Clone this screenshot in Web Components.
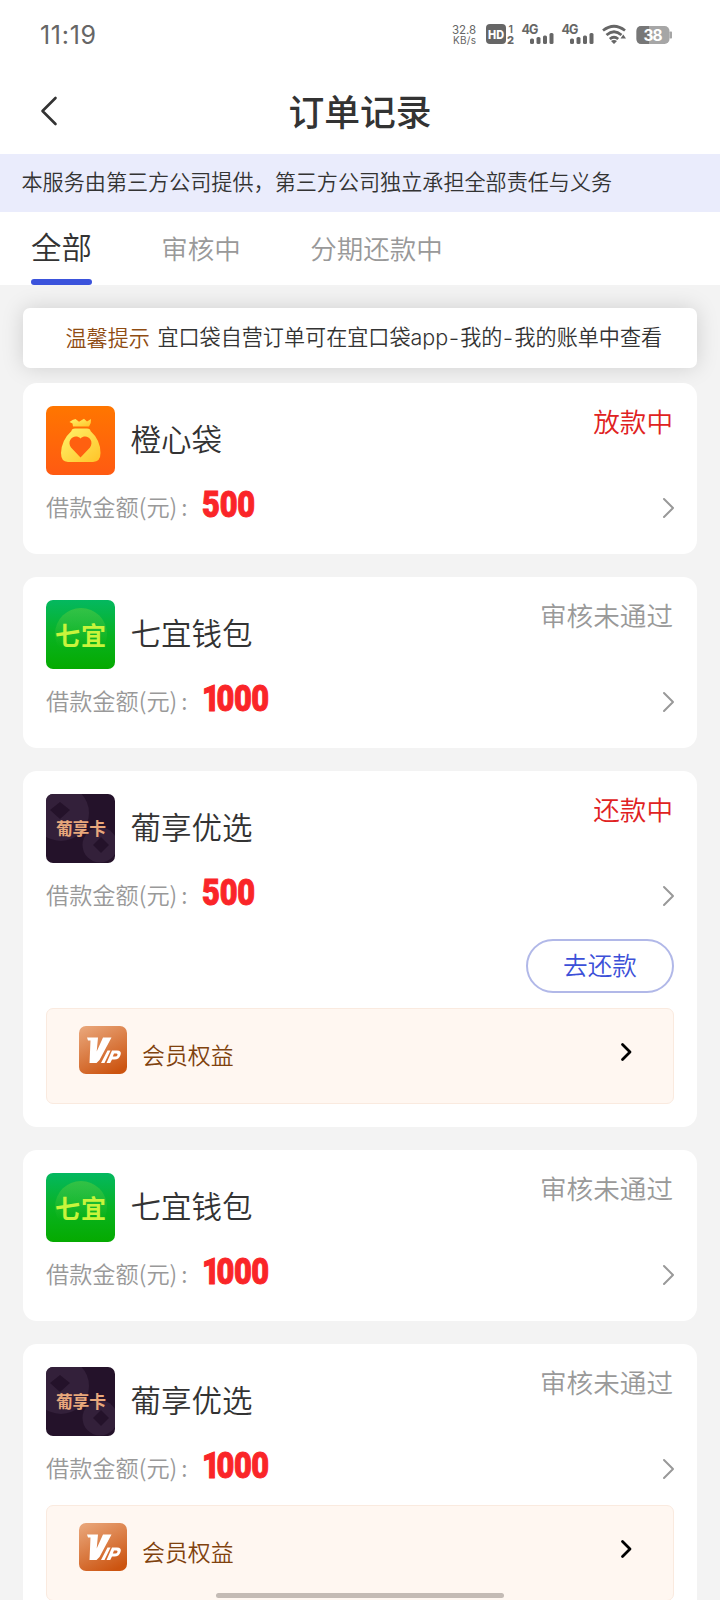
<!DOCTYPE html>
<html lang="zh-CN">
<head>
<meta charset="utf-8">
<title>订单记录</title>
<style>
html,body{margin:0;padding:0;background:#f3f3f3}
body{font-family:"Noto Sans CJK SC",sans-serif;color:#333;width:720px;height:1600px;overflow:hidden}
</style>
</head>
<body>
<order-page></order-page>
<script>
const define = (name, html, init) => {
  const t = document.createElement('template');
  t.innerHTML = html;
  customElements.define(name, class extends HTMLElement {
    constructor() {
      super();
      this.attachShadow({mode: 'open'}).append(t.content.cloneNode(true));
    }
    connectedCallback() { if (init) init(this, this.shadowRoot); }
  });
};

define('status-bar', `
<style>
:host{display:flex;height:68px;padding:0 48px 0 40px;align-items:center;justify-content:space-between;box-sizing:border-box;color:#666}
.time{font:400 25px/30px Inter,sans-serif;letter-spacing:.7px;padding-top:1px}
svg{display:block}
text{font-family:Inter,sans-serif;fill:#666}
</style>
<span class="time">11:19</span>
<svg width="222" height="30" viewBox="450 18 222 30">
  <text x="452" y="32.500" font-size="11.500" textLength="24">32.8</text>
  <text x="453" y="42.500" font-size="10" textLength="23">KB/s</text>
  <rect x="486" y="23" width="20" height="20" rx="4" fill="#666"/>
  <text x="488" y="37.600" font-size="12" font-weight="800" style="fill:#fff" textLength="16" lengthAdjust="spacingAndGlyphs">HD</text>
  <text x="508.500" y="31.500" font-size="10.500" font-weight="600">1</text>
  <text x="507" y="43" font-size="11" font-weight="800" textLength="7.500">2</text>
  <text x="521.500" y="32.500" font-size="12.500" font-weight="700" textLength="17">4G</text>
  <g fill="#666"><rect x="530" y="37.500" width="4" height="5.500" rx="1.500"/><rect x="536.500" y="36" width="4" height="7" rx="1.500"/><rect x="543" y="34.500" width="4" height="8.500" rx="1.500"/><rect x="549.500" y="32" width="4" height="11" rx="1.500"/></g>
  <text x="561.500" y="32.500" font-size="12.500" font-weight="700" textLength="17">4G</text>
  <g fill="#666"><rect x="570" y="37.500" width="4" height="5.500" rx="1.500"/><rect x="576.500" y="36" width="4" height="7" rx="1.500"/><rect x="583" y="34.500" width="4" height="8.500" rx="1.500"/><rect x="589.500" y="32" width="4" height="11" rx="1.500"/></g>
  <g fill="none" stroke="#666" stroke-width="2.800"><path d="M603 29.500Q614 21 625 29.500"/><path d="M606.500 34Q614 27.500 621.500 34"/><path d="M609.800 38Q614 34.500 618.200 38"/></g>
  <path d="M611 40Q614 37.800 617 40L614 43ZM620.500 37.500h5.500l-2.700-4Z" fill="#666"/>
  <rect x="636.500" y="25" width="33" height="18" rx="5" fill="#a6a6a6"/>
  <path d="M641.500 25H649V43H641.500Q636.500 43 636.500 38V30Q636.500 25 641.500 25Z" fill="#777"/>
  <rect x="669.500" y="30.500" width="2.500" height="7" rx=".7" fill="#a6a6a6"/>
  <text x="643.500" y="39.500" font-size="15.500" font-weight="700" style="fill:#fff" textLength="19">38</text>
</svg>`);

define('nav-bar', `
<style>
:host{display:grid;grid-template-columns:80px 1fr 80px;height:86px;align-items:center;box-sizing:border-box}
svg{display:block;margin-left:40px}
h1{margin:0;font-size:35.800px;line-height:50px;font-weight:500;text-align:center;padding-bottom:2px}
</style>
<svg width="20" height="30" viewBox="0 0 20 30"><path d="M15.500 2L2.500 15L15.500 28" fill="none" stroke="#333" stroke-width="2.600" stroke-linecap="round" stroke-linejoin="round"/></svg>
<h1><slot></slot></h1>`);

define('service-banner', `
<style>
:host{display:flex;height:58px;align-items:center;padding:0 21.500px 5px;box-sizing:border-box;background:#eaecfc;font-size:21.100px;line-height:30px;font-weight:350;white-space:nowrap}
</style><slot></slot>`);

define('tab-item', `
<style>
:host{display:flex;height:73px;box-sizing:border-box;padding-top:17px;position:relative;font-size:26.500px;line-height:38px;color:#999;font-weight:350;white-space:nowrap}
:host([active]){font-size:30.400px;color:#333;padding-top:15px}
:host([active])::after{content:"";position:absolute;left:0;right:0;bottom:0;height:6px;border-radius:3px;background:#3b53dc}
</style><slot></slot>`);

define('tab-bar', `
<style>:host{display:flex;height:73px;padding-left:31px;gap:69.500px;background:#fff}</style><slot></slot>`);

define('tip-notice', `
<style>
:host{display:flex;margin:23px 23px 15px;height:60px;box-sizing:border-box;padding:0 0 3px 42.500px;align-items:center;background:#fff;border-radius:7px;box-shadow:0 0 22px rgba(0,0,0,.15);font-size:21.100px;line-height:30px;font-weight:350;white-space:pre}
b{font-weight:350;color:#8f4c12;margin-right:7.500px}
</style><b><slot name="label"></slot></b><slot></slot>`);

define('app-logo', `
<style>:host{display:block;width:69px;height:69px}svg{display:none}
:host([kind=bag]) .bag,:host([kind=qi]) .qi,:host([kind=pu]) .pu{display:block}
text{font-family:"Noto Sans CJK SC",sans-serif}</style>
<svg class="bag" width="69" height="69" viewBox="0 0 69 69"><defs><linearGradient id="o" x1="0" y1="0" x2="0" y2="1"><stop stop-color="#ff7600"/><stop offset="1" stop-color="#ff5a12"/></linearGradient><linearGradient id="y" x1="0" y1="0" x2="1" y2="1"><stop stop-color="#fff36b"/><stop offset="1" stop-color="#ffc328"/></linearGradient></defs>
<rect width="69" height="69" rx="7" fill="url(#o)"/>
<path d="M27 20.500L26.500 17.500L23.500 16Q26.500 13.500 29.500 13L33 15.800L38 12.800L41 15.500L45 13Q45.500 17 43 20.500Z" fill="url(#y)"/>
<path d="M25.500 25Q25.500 22.500 29 22.500H41Q44.500 22.500 44.500 25Q54.500 34 54.500 47Q54.500 55.800 47 56H22Q15 55.800 15 47Q15.500 34 25.500 25Z" fill="url(#y)"/>
<path d="M34.500 51.500L25 41.500C20 34.500 28.500 27 34.500 32.500C40.500 27 49 34.500 44 41.500Z" fill="#ff6010"/></svg>
<svg class="qi" width="69" height="69" viewBox="0 0 69 69"><defs><linearGradient id="g" x1="0" y1="0" x2="0" y2="1"><stop stop-color="#04b860"/><stop offset=".55" stop-color="#08b21e"/><stop offset="1" stop-color="#05aa00"/></linearGradient><linearGradient id="h" x1="0" y1="0" x2="0" y2="1"><stop stop-color="#4cc83e"/><stop offset=".75" stop-color="#4cc83e" stop-opacity="0"/></linearGradient></defs>
<rect width="69" height="69" rx="7" fill="url(#g)"/><circle cx="35" cy="34" r="26" fill="url(#h)" opacity=".65"/>
<text x="9" y="44.500" font-size="25" font-weight="700" fill="#c8f43c" textLength="51">七宜</text></svg>
<svg class="pu" width="69" height="69" viewBox="0 0 69 69"><defs><clipPath id="k"><rect width="69" height="69" rx="7"/></clipPath></defs>
<g clip-path="url(#k)"><rect width="69" height="69" fill="#24122a"/><g fill="#33203a"><circle cx="15" cy="19" r="28"/><circle cx="54" cy="51" r="17.500"/></g><path d="M14 8L24 16L14 25L4 16ZM55 43L63 51L55 59L47 51Z" fill="#24122a"/></g>
<text x="10" y="40.500" font-size="16.800" font-weight="700" fill="#e8a87c" textLength="50">葡享卡</text></svg>`);

define('vip-row', `
<style>
:host{display:flex;height:96px;box-sizing:border-box;border:1px solid #faeadf;border-radius:7px;background:#fff7f1;padding:17px 41px 0 32px;font-size:22.900px;line-height:34px;color:#80420e;font-weight:350}
span{margin:11px auto 0 15px}
.go{margin-top:16px}
</style>
<svg width="48" height="48" viewBox="0 0 48 48"><defs><linearGradient id="v" x1=".2" y1="0" x2=".7" y2="1"><stop stop-color="#e8a376"/><stop offset="1" stop-color="#cc5410"/></linearGradient></defs><rect width="48" height="48" rx="7" fill="url(#v)"/>
<path d="M8 11.500H19L17.700 25.500L24 11.500H32.500L20.500 34L17.500 37H10.500L11.500 14.500H9Z" fill="#fff"/><path d="M28.500 24.500H31.500L25.500 37H22ZM33 24.500H38Q43 24.500 41.500 29Q40 33.500 35.500 33.500H33L31.200 37H27.500L29.500 32.500ZM35 27.500L33.800 30.600H36Q38 30.600 38.500 29Q38.800 27.500 37.500 27.500Z" fill="#fff" fill-rule="evenodd"/></svg>
<span><slot></slot></span>
<svg class="go" width="12" height="20" viewBox="0 0 12 20"><path d="M2.500 2.500L10 10L2.500 17.500" fill="none" stroke="#000" stroke-width="2.800" stroke-linecap="round" stroke-linejoin="round"/></svg>`);

define('pill-button', `
<style>
:host{display:block;width:148px;height:54px;box-sizing:border-box;border:2px solid #b1b8e8;border-radius:27px;text-align:center;font-size:24.600px;line-height:46px;font-weight:350;color:#3c50d8}
</style><slot></slot>`);

define('order-card', `
<style>
:host{display:flex;flex-direction:column;margin:0 23px 23px;padding:23px;min-height:171px;box-sizing:border-box;background:#fff;border-radius:14px}
.top{display:flex;height:69px}
.name{font-size:30.500px;line-height:44px;font-weight:350;margin:10px auto 0 15.500px}
.state{font-size:26.600px;line-height:38px;font-weight:350;color:#999;margin:-4px 1px 0 0}
:host([hot]) .state{color:#e02222}
.sum{display:flex;height:46px;align-items:center;color:#999;font-size:23.200px;font-weight:350;line-height:34px}
.lab{width:156px;white-space:nowrap;margin-top:16px}
.num{font:900 37.500px/44px Roboto,sans-serif;color:#fa2528;-webkit-text-stroke:1px #fa2528;transform:scaleX(.82);transform-origin:0 50%;margin:11px auto 0 0;letter-spacing:-.2px}
.num.thousand{letter-spacing:-.6px}
.num.thousand::first-letter{letter-spacing:-4px}
.colon{margin-left:4px}
.go{margin:19px -1px 0 0}
slot[name=action]{display:flex;justify-content:flex-end}
::slotted(pill-button){margin:18px 0 4px}
slot[name=extra]{display:block}
:host([vip]) slot[name=extra]{padding-top:23px}
:host([pay]) slot[name=action]{padding-top:12px}
:host([pay]) slot[name=extra]{padding-top:11px}
</style>
<div class="top"><app-logo></app-logo><span class="name"></span><span class="state"></span></div>
<div class="sum"><span class="lab">借款金额(元)<span class="colon">:</span></span><span class="num"></span>
<svg class="go" width="13" height="22" viewBox="0 0 13 22"><path d="M2 2L11 11L2 20" fill="none" stroke="#999" stroke-width="2" stroke-linecap="round" stroke-linejoin="round"/></svg></div>
<slot name="action"></slot><slot name="extra"></slot>`, (el, root) => {
  root.querySelector('app-logo').setAttribute('kind', el.getAttribute('kind'));
  root.querySelector('.name').textContent = el.getAttribute('name');
  root.querySelector('.state').textContent = el.getAttribute('state');
  const num = root.querySelector('.num');
  num.textContent = el.getAttribute('sum');
  num.classList.toggle('thousand', num.textContent.length > 3);
});

define('order-page', `
<style>
:host{display:block;position:relative;width:720px;height:1600px;overflow:hidden;background:#f3f3f3}
header{background:#fff}
.latin{font-family:Inter,sans-serif;font-size:21.500px}
.dash{display:inline-block;width:12px;text-align:center;transform:scaleX(1.3)}
.home{position:absolute;left:216px;top:1593px;width:288px;height:5px;border-radius:3px;background:#c4bbb5}
</style>
<header><status-bar></status-bar><nav-bar>订单记录</nav-bar></header>
<service-banner>本服务由第三方公司提供，第三方公司独立承担全部责任与义务</service-banner>
<tab-bar><tab-item active>全部</tab-item><tab-item>审核中</tab-item><tab-item>分期还款中</tab-item></tab-bar>
<tip-notice><span slot="label">温馨提示</span><span>宜口袋自营订单可在宜口袋<span class="latin">app</span><span class="dash">-</span>我的<span class="dash">-</span>我的账单中查看</span></tip-notice>
<order-card kind="bag" name="橙心袋" state="放款中" sum="500" hot></order-card>
<order-card kind="qi" name="七宜钱包" state="审核未通过" sum="1000"></order-card>
<order-card kind="pu" name="葡享优选" state="还款中" sum="500" hot pay><pill-button slot="action">去还款</pill-button><vip-row slot="extra">会员权益</vip-row></order-card>
<order-card kind="qi" name="七宜钱包" state="审核未通过" sum="1000"></order-card>
<order-card kind="pu" name="葡享优选" state="审核未通过" sum="1000" vip><vip-row slot="extra">会员权益</vip-row></order-card>
<div class="home"></div>`);
</script>
</body>
</html>
